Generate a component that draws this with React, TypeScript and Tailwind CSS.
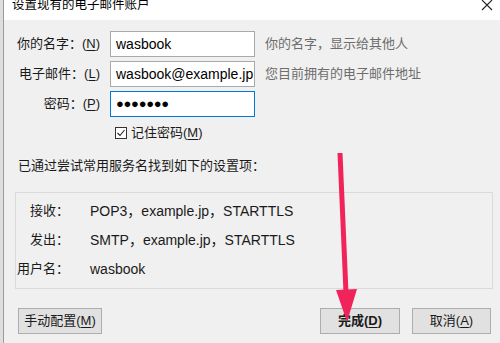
import React from "react";

const font = { fontFamily: '"Liberation Sans", "Noto Sans CJK SC", sans-serif' };

const Acc = ({ text, k }: { text: string; k: string }) => (
  <span className="whitespace-nowrap">
    {text}(<span className="underline underline-offset-2">{k}</span>)
  </span>
);

const FormRow = ({
  label,
  k,
  children,
  hint,
}: {
  label: string;
  k: string;
  children: React.ReactNode;
  hint?: string;
}) => (
  <div className="flex items-center h-[26px]">
    <div className="w-[84px] -ml-[2px] text-right text-[13px] leading-[16px] text-[#1a1a1a] whitespace-nowrap">
      <Acc text={label} k={k} />
    </div>
    <div className="ml-[10px] w-[145px] h-[26px]">{children}</div>
    {hint && (
      <div className="ml-[10px] text-[13px] leading-[16px] text-[#6d6d6d] whitespace-nowrap">
        {hint}
      </div>
    )}
  </div>
);

const InfoRow = ({ label, value }: { label: string; value: string }) => (
  <div className="flex items-center h-[16px]">
    <div className="w-[53px] text-right text-[13px] leading-[16px] text-[#1a1a1a] whitespace-nowrap">
      {label}
    </div>
    <div className="ml-[21px] text-[14px] leading-[16px] text-[#1a1a1a] whitespace-nowrap">{value}</div>
  </div>
);

const Btn = ({
  children,
  w,
  bold,
}: {
  children: React.ReactNode;
  w: string;
  bold?: boolean;
}) => (
  <div
    className={`${w} h-[26px] flex items-center justify-center bg-[#e1e1e1] border border-[#adadad] text-[13px] leading-[16px] text-[#1a1a1a] ${
      bold ? "font-bold" : ""
    }`}
  >
    {children}
  </div>
);

export default function App() {
  return (
    <div className="relative w-[500px] h-[343px] overflow-hidden flex bg-[#f0f0f0]" style={font}>
      <div className="w-[3px] bg-[#dedede]" />
      <div className="w-px bg-[#9c9c9c]" />
      <div className="flex-1 flex flex-col">
        <div className="h-[20px] bg-white flex items-start justify-between">
          <div className="ml-[8px] -mt-[3px] text-[12.5px] leading-[16px] text-black whitespace-nowrap">
            设置现有的电子邮件账户
          </div>
          <svg width="12" height="11" viewBox="0 0 12 11" className="mr-[7px]">
            <path d="M1 0 L11 10 M11 0 L1 10" stroke="#222" strokeWidth="1.1" />
          </svg>
        </div>

        <div className="flex-1 flex flex-col pl-[14px] pt-[11px]">
          <div className="flex flex-col gap-[4px]">
            <FormRow label="你的名字：" k="N" hint="你的名字，显示给其他人">
              <div className="w-full h-full bg-white border border-[#a9a9a9] flex items-center pl-[5px] text-[14px] text-black overflow-hidden whitespace-nowrap">
                wasbook
              </div>
            </FormRow>
            <FormRow label="电子邮件：" k="L" hint="您目前拥有的电子邮件地址">
              <div className="w-full h-full bg-white border border-[#a9a9a9] flex items-center pl-[5px] text-[14px] text-black overflow-hidden whitespace-nowrap">
                wasbook@example.jp
              </div>
            </FormRow>
            <FormRow label="密码：" k="P">
              <div className="w-full h-full bg-white border border-[#0078d7] flex items-center pl-[5px] text-[13px] tracking-[-0.3px] text-black overflow-hidden whitespace-nowrap">
                ●●●●●●●
              </div>
            </FormRow>
          </div>

          <div className="flex items-center mt-[9px] ml-[97px] h-[13px]">
            <div className="w-[12px] h-[12px] border border-[#333] bg-white flex items-center justify-center">
              <svg width="10" height="10" viewBox="0 0 10 10">
                <path d="M1.5 5 L4 7.5 L8.5 2" fill="none" stroke="#222" strokeWidth="1.1" />
              </svg>
            </div>
            <div className="ml-[4px] text-[13px] leading-[16px] text-[#1a1a1a]">
              <Acc text="记住密码" k="M" />
            </div>
          </div>

          <div className="mt-[19px] text-[13px] leading-[16px] text-[#1a1a1a]">
            已通过尝试常用服务名找到如下的设置项：
          </div>

          <div className="mt-[18px] -ml-[3px] mr-[7px] h-[97px] border border-[#dadada] flex flex-col pt-[10px] gap-[13px]">
            <InfoRow label="接收：" value="POP3，example.jp，STARTTLS" />
            <InfoRow label="发出：" value="SMTP，example.jp，STARTTLS" />
            <InfoRow label="用户名：" value="wasbook" />
          </div>

          <div className="mt-[19px] flex items-center">
            <Btn w="w-[84px]">
              <Acc text="手动配置" k="M" />
            </Btn>
            <div className="ml-auto mr-[9px] flex gap-[12px]">
              <Btn w="w-[80px]" bold>
                <Acc text="完成" k="D" />
              </Btn>
              <Btn w="w-[79px]">
                <Acc text="取消" k="A" />
              </Btn>
            </div>
          </div>
        </div>
      </div>

      <svg
        className="absolute inset-0 pointer-events-none"
        width="500"
        height="343"
        viewBox="0 0 500 343"
      >
        <line x1="340" y1="153" x2="346" y2="293" stroke="#f0245a" strokeWidth="5" />
        <polygon points="336,290 357,289 347,322" fill="#f0245a" />
      </svg>
    </div>
  );
}
